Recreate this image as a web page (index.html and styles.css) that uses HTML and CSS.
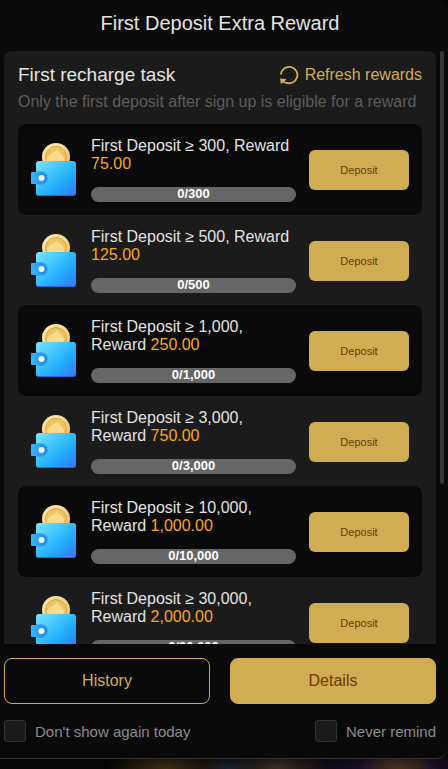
FILE: index.html
```html
<!DOCTYPE html>
<html lang="en">
<head>
<meta charset="utf-8">
<meta name="viewport" content="width=device-width, initial-scale=1">
<title>First Deposit Extra Reward</title>
<link rel="stylesheet" href="styles.css">
</head>
<body>
<svg class="defs" aria-hidden="true">
  <defs>
    <linearGradient id="wallet-fill" x1="0" y1="0" x2="1" y2="1">
      <stop offset="0" stop-color="#7fe3fc"/>
      <stop offset=".3" stop-color="#4bcbfd"/>
      <stop offset=".65" stop-color="#1faafe"/>
      <stop offset="1" stop-color="#3d72fb"/>
    </linearGradient>
    <linearGradient id="clasp-fill" x1="0" y1="0" x2="1" y2="0">
      <stop offset="0" stop-color="#3fb4f8"/>
      <stop offset="1" stop-color="#1f86e6"/>
    </linearGradient>
    <linearGradient id="coin-fill" x1="0" y1="0" x2="1" y2="1">
      <stop offset="0" stop-color="#ffeeb4"/>
      <stop offset="1" stop-color="#f0bd62"/>
    </linearGradient>
    <symbol id="wallet" viewBox="0 0 60 60">
      <circle cx="32" cy="17" r="14" fill="url(#coin-fill)"/>
      <circle cx="32" cy="17" r="10.500" fill="#f0c364" stroke="#dba548" stroke-width="1"/>
      <path d="M33 9c1 3 7 5 7 10 0 4-4 5-7 3H29c-3 1-6 0-6-3 0-5 8-6 10-10z" fill="#fbdc8c"/>
      <rect x="12" y="21" width="40" height="35" rx="3" fill="url(#wallet-fill)"/>
      <path d="M14 55.500h35q2 0 2.500-2" fill="none" stroke="#2b62d8" stroke-width="1"/>
      <path d="M12 31h5a7 7 0 0 1 0 14h-5z" fill="#2a9cf0" opacity=".6"/>
      <path d="M8 32h9a6 6 0 0 1 0 12H8q-1 0-1-1V33q0-1 1-1z" fill="url(#clasp-fill)"/>
      <circle cx="17.500" cy="38" r="3" fill="#eefaff"/>
    </symbol>
  </defs>
</svg>
<main class="popup">
  <h1 class="popup-title">First Deposit Extra Reward</h1>
  <div class="viewport">
    <section class="panel">
      <header class="panel-head">
        <h2 class="panel-title">First recharge task</h2>
        <button class="refresh" type="button">
          <svg class="refresh-icon" viewBox="0 0 20 20" aria-hidden="true">
            <path d="M2 9.500A8.200 8.200 0 1 1 7 17.600" fill="none" stroke="currentColor" stroke-width="1.800"/>
            <path d="M1 13.500l6.500.5-2 2.500 2.500 1-.5 1.500-3.500-1.500L2 19z" fill="currentColor"/>
          </svg>
          Refresh rewards
        </button>
      </header>
      <p class="panel-note">Only the first deposit after sign up is eligible for a reward</p>
      <ul class="tasks">
        <li class="task">
          <svg class="task-icon" aria-hidden="true"><use href="#wallet"/></svg>
          <div class="task-body">
            <p class="task-text">First Deposit ≥ 300, Reward <span class="amount">75.00</span></p>
            <div class="bar">0/300</div>
          </div>
          <button class="deposit" type="button">Deposit</button>
        </li>
        <li class="task">
          <svg class="task-icon" aria-hidden="true"><use href="#wallet"/></svg>
          <div class="task-body">
            <p class="task-text">First Deposit ≥ 500, Reward <span class="amount">125.00</span></p>
            <div class="bar">0/500</div>
          </div>
          <button class="deposit" type="button">Deposit</button>
        </li>
        <li class="task">
          <svg class="task-icon" aria-hidden="true"><use href="#wallet"/></svg>
          <div class="task-body">
            <p class="task-text">First Deposit ≥ 1,000, Reward <span class="amount">250.00</span></p>
            <div class="bar">0/1,000</div>
          </div>
          <button class="deposit" type="button">Deposit</button>
        </li>
        <li class="task">
          <svg class="task-icon" aria-hidden="true"><use href="#wallet"/></svg>
          <div class="task-body">
            <p class="task-text">First Deposit ≥ 3,000, Reward <span class="amount">750.00</span></p>
            <div class="bar">0/3,000</div>
          </div>
          <button class="deposit" type="button">Deposit</button>
        </li>
        <li class="task">
          <svg class="task-icon" aria-hidden="true"><use href="#wallet"/></svg>
          <div class="task-body">
            <p class="task-text">First Deposit ≥ 10,000, Reward <span class="amount">1,000.00</span></p>
            <div class="bar">0/10,000</div>
          </div>
          <button class="deposit" type="button">Deposit</button>
        </li>
        <li class="task">
          <svg class="task-icon" aria-hidden="true"><use href="#wallet"/></svg>
          <div class="task-body">
            <p class="task-text">First Deposit ≥ 30,000, Reward <span class="amount">2,000.00</span></p>
            <div class="bar">0/30,000</div>
          </div>
          <button class="deposit" type="button">Deposit</button>
        </li>
      </ul>
    </section>
    <div class="scroll-thumb"></div>
  </div>
  <div class="actions">
    <button class="action action-outline" type="button">History</button>
    <button class="action action-solid" type="button">Details</button>
  </div>
  <div class="options">
    <label class="option"><input class="check" type="checkbox">Don't show again today</label>
    <label class="option"><input class="check" type="checkbox">Never remind</label>
  </div>
</main>
</body>
</html>
```
FILE: styles.css
```css
* {
  box-sizing: border-box;
}

body {
  margin: 0;
  height: 100vh;
  overflow: hidden;
  padding-bottom: 10px;
  font-family: "Liberation Sans", Arial, sans-serif;
  color: #e3e3e3;
  background:
    radial-gradient(ellipse 60px 20px at 37% 100%, #3a2c12, transparent),
    radial-gradient(ellipse 50px 20px at 62% 100%, #3a2f24, transparent),
    radial-gradient(ellipse 40px 20px at 89% 100%, #4a3216, transparent),
    radial-gradient(ellipse 110px 24px at 88% 100%, #1f1236, transparent),
    radial-gradient(ellipse 30px 16px at 51% 100%, #1b2430, transparent),
    #050505;
}

h1,
h2,
p,
ul {
  margin: 0;
  padding: 0;
}

button {
  font-family: inherit;
  cursor: pointer;
}

.defs {
  position: absolute;
  width: 0;
  height: 0;
}

.popup {
  display: flex;
  flex-direction: column;
  height: 100%;
  padding: 0 4px 16px;
  background: #0a0a0a;
  border-bottom: 1px solid #333;
  border-radius: 0 12px 12px 0;
}

.popup-title {
  padding: 11px 8px 16px 0;
  font-size: 20px;
  line-height: 24px;
  font-weight: 400;
  text-align: center;
}

.viewport {
  position: relative;
  flex: 1;
  min-height: 0;
  overflow: hidden;
  padding-right: 8px;
}

.panel {
  padding: 12px 14px;
  background: #1b1b1b;
  border-radius: 8px;
}

.scroll-thumb {
  position: absolute;
  top: 0;
  right: 0;
  width: 4px;
  height: 73%;
  border-radius: 2px;
  background: #363636;
}

.panel-head {
  display: flex;
  justify-content: space-between;
  align-items: center;
}

.panel-title {
  font-size: 19px;
  line-height: 24px;
  font-weight: 400;
}

.refresh {
  display: flex;
  align-items: center;
  gap: 6px;
  padding: 0;
  border: 0;
  background: none;
  color: #d0ad52;
  font-size: 16px;
  line-height: 24px;
}

.refresh-icon {
  width: 20px;
  height: 20px;
}

.panel-note {
  padding: 4px 0 12px;
  color: #5d5d5d;
  font-size: 16px;
  line-height: 21px;
}

.tasks {
  list-style: none;
}

.task {
  display: flex;
  align-items: center;
  padding: 13px;
  padding-left: 6px;
  border-radius: 8px;
}

.task:nth-child(odd) {
  background: #0a0a0a;
}

.task:nth-child(even) {
  padding-bottom: 12px;
}

.task-icon {
  flex: none;
  width: 60px;
  height: 60px;
}

.task-body {
  flex: 1;
  margin: 0 13px 0 7px;
}

.task-text {
  font-size: 16px;
  line-height: 18px;
}

.amount {
  color: #f7a81b;
}

.bar {
  height: 15px;
  margin-top: 14px;
  border-radius: 8px;
  background: #666;
  color: #fff;
  font-size: 13px;
  line-height: 13px;
  font-weight: 700;
  text-align: center;
}

.deposit {
  flex: none;
  width: 100px;
  height: 40px;
  border: 0;
  border-radius: 6px;
  background: #d0ad52;
  color: #6c3802;
  font-size: 11px;
}

.actions {
  display: flex;
  gap: 20px;
  padding: 14px 8px 16px 0;
}

.action {
  flex: 1;
  height: 46px;
  border: 1px solid #d0ad52;
  border-radius: 8px;
  font-size: 16px;
}

.action-outline {
  background: transparent;
  color: #d0ad52;
}

.action-solid {
  background: #d0ad52;
  color: #6c3802;
}

.options {
  display: flex;
  justify-content: space-between;
  padding-right: 8px;
}

.option {
  display: flex;
  align-items: center;
  gap: 9px;
  color: #8c8c8c;
  font-size: 15px;
}

.check {
  appearance: none;
  width: 22px;
  height: 22px;
  margin: 0;
  border: 1px solid #333;
  border-radius: 3px;
  background: #1b1b1b;
}
```
